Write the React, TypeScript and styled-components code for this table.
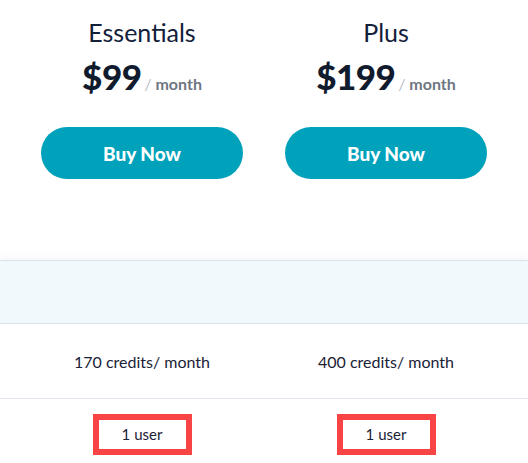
import styled, { createGlobalStyle } from 'styled-components';

const GlobalStyle = createGlobalStyle`
  html, body {
    margin: 0;
    padding: 0;
    background: #ffffff;
    font-family: Lato, "Liberation Sans", sans-serif;
    color: #14213d;
    overflow: hidden;
  }
`;

const plans = [
  { name: 'Essentials', price: '$99', credits: '170 credits/ month', users: '1 user' },
  { name: 'Plus', price: '$199', credits: '400 credits/ month', users: '1 user' },
];

const App = () => {
  return (
    <>
      <GlobalStyle />
      <Table>
        <HeaderRow>
          {plans.map((plan) => (
            <PlanCell key={plan.name}>
              <PlanName>{plan.name}</PlanName>
              <PriceLine>
                <Price>{plan.price}</Price>
                <Slash>/</Slash>
                <Per>month</Per>
              </PriceLine>
              <BuyButton>Buy Now</BuyButton>
            </PlanCell>
          ))}
        </HeaderRow>
        <Band />
        <Row $height={74}>
          {plans.map((plan) => (
            <Cell key={plan.name}>{plan.credits}</Cell>
          ))}
        </Row>
        <Row $height={70} $last>
          {plans.map((plan) => (
            <Cell key={plan.name}>
              <Highlight>{plan.users}</Highlight>
            </Cell>
          ))}
        </Row>
      </Table>
    </>
  );
};

const Table = styled.div`
  width: 528px;
  display: flex;
  flex-direction: column;
`;

const HeaderRow = styled.div`
  display: grid;
  grid-template-columns: 244px 244px;
  padding-left: 20px;
  height: 254px;
`;

const PlanCell = styled.div`
  display: flex;
  flex-direction: column;
  align-items: center;
  padding-top: 16px;
`;

const PlanName = styled.div`
  font-size: 25px;
  font-weight: 400;
  line-height: 32px;
  color: #13203a;
`;

const PriceLine = styled.div`
  display: flex;
  align-items: baseline;
  margin-top: 8px;
`;

const Price = styled.span`
  font-size: 35px;
  font-weight: 900;
  line-height: 40px;
  color: #111b2e;
  letter-spacing: -0.5px;
`;

const Slash = styled.span`
  font-size: 16px;
  font-weight: 300;
  color: #8a909b;
  margin-left: 3px;
  margin-right: 4px;
`;

const Per = styled.span`
  font-size: 16px;
  font-weight: 700;
  color: #6f7683;
`;

const BuyButton = styled.button`
  margin-top: 31px;
  width: 202px;
  height: 52px;
  border: none;
  border-radius: 26px;
  background: #00a2bb;
  color: #ffffff;
  font-family: Lato, "Liberation Sans", sans-serif;
  font-size: 19px;
  font-weight: 900;
  cursor: pointer;
`;

const Band = styled.div`
  height: 62px;
  background: #f0f9fc;
  border-top: 1px solid #dfe1ea;
  border-bottom: 1px solid #dfe1ea;
  margin-top: 6px;
  box-shadow: 0 -4px 6px rgba(0, 0, 0, 0.03);
`;

const Row = styled.div<{ $height: number; $last?: boolean }>`
  display: grid;
  grid-template-columns: 244px 244px;
  padding-left: 20px;
  height: ${(p) => p.$height}px;
  border-bottom: ${(p) => (p.$last ? 'none' : '1px solid #e3e2ee')};
`;

const Cell = styled.div`
  display: flex;
  align-items: center;
  justify-content: center;
  font-size: 16px;
  color: #1a2236;
`;

const Highlight = styled.div`
  box-sizing: border-box;
  width: 99px;
  height: 41px;
  border: 6px solid #f84444;
  display: flex;
  align-items: center;
  justify-content: center;
  font-size: 15px;
  color: #1a2236;
`;

export default App;
